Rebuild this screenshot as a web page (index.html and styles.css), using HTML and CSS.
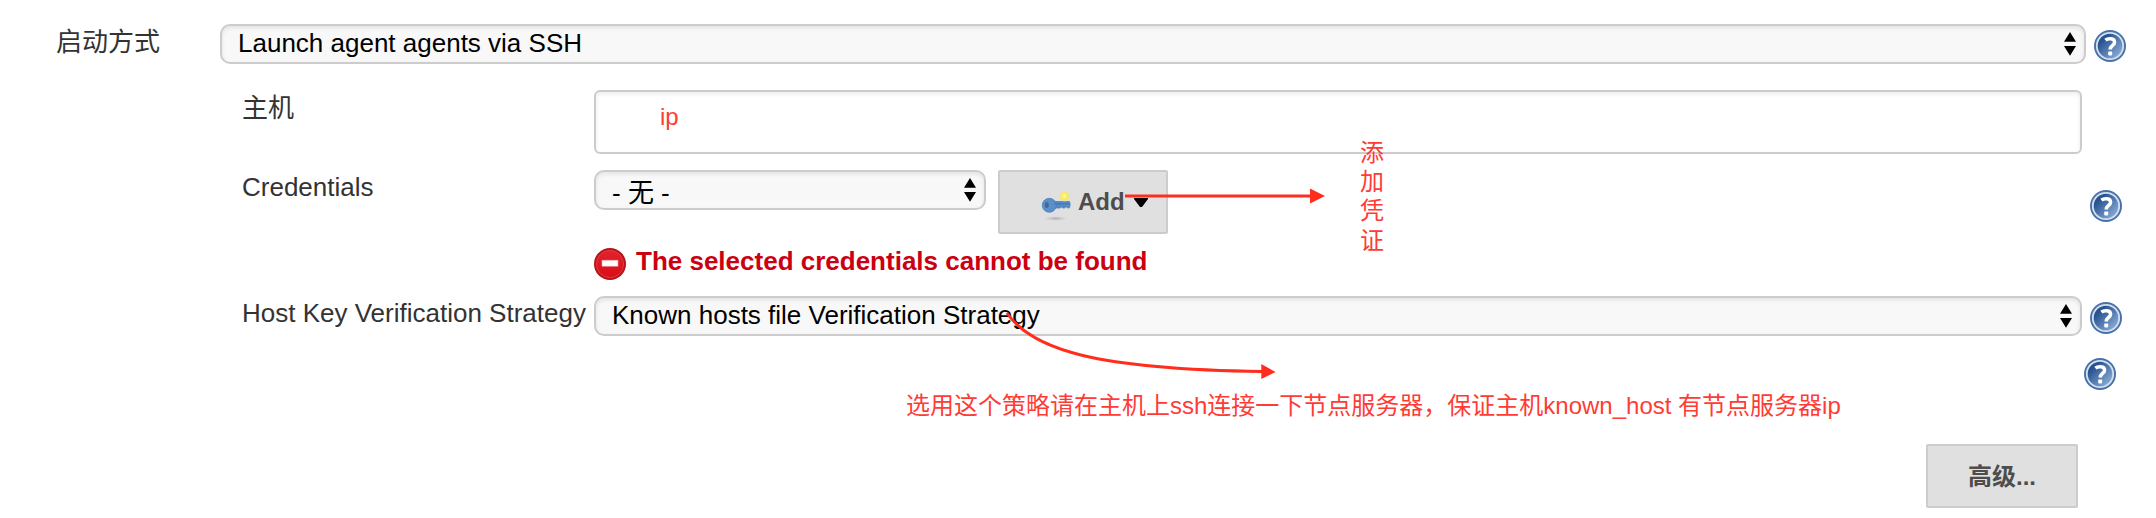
FILE: index.html
```html
<!DOCTYPE html>
<html lang="zh-CN">
<head>
<meta charset="utf-8">
<title>启动方式</title>
<link rel="stylesheet" href="styles.css">
</head>
<body>
<svg class="defs" width="0" height="0">
  <defs>
    <linearGradient id="blue" x1="0" y1="0" x2="1" y2="1"><stop offset=".25" stop-color="#285391"/><stop offset=".85" stop-color="#86aad3"/></linearGradient>
    <linearGradient id="red" x1="0" y1="0" x2="0" y2="1"><stop offset="0" stop-color="#e3222b"/><stop offset="1" stop-color="#d90d18"/></linearGradient>
    <radialGradient id="glow"><stop offset="0" stop-color="#fffbb0"/><stop offset=".5" stop-color="#f8ec57"/><stop offset="1" stop-color="#f3e760" stop-opacity=".35"/></radialGradient>
    <radialGradient id="shade"><stop offset="0" stop-color="#999" stop-opacity=".75"/><stop offset="1" stop-color="#bbb" stop-opacity="0"/></radialGradient>
  </defs>
  <symbol id="help" viewBox="0 0 32 32">
    <circle cx="16" cy="16" r="16" fill="#4872aa"/>
    <circle cx="16" cy="16" r="13.2" fill="url(#blue)" stroke="#d5e0ee" stroke-width="1.8"/>
    <path d="M11.4 10.2C14 8 20.6 7.8 20.6 12.2C20.6 15.5 16.2 15.4 16.2 19.6" fill="none" stroke="#fff" stroke-width="3.5"/>
    <rect x="14.2" y="21.6" width="4" height="3.8" rx=".8" fill="#fff"/>
  </symbol>
  <symbol id="updown" viewBox="0 0 12 24"><path d="M0 9.7L6 0L12 9.7ZM0 14L6 23.7L12 14Z"/></symbol>
</svg>
<main class="form">
  <div class="row row-launch">
    <label class="label">启动方式</label>
    <div class="select"><span>Launch agent agents via SSH</span><svg class="arrows"><use href="#updown"/></svg></div>
    <svg class="help"><use href="#help"/></svg>
  </div>
  <div class="row row-host">
    <label class="label">主机</label>
    <div class="input"><span class="note">ip</span></div>
  </div>
  <div class="row row-cred">
    <label class="label">Credentials</label>
    <div class="select select-short"><span>- 无 -</span><svg class="arrows"><use href="#updown"/></svg></div>
    <div class="button add">
      <svg class="key" viewBox="0 0 32 32">
        <ellipse cx="14.5" cy="28.5" rx="12" ry="2.4" fill="url(#shade)"/>
        <path d="M13 11.5L28.5 11.5Q30 14 28.5 17.8H26.5L25 16.7L23.5 18H22L20.5 17L19 18H13Z" fill="#558ac5" stroke="#4c80bb" stroke-width=".8"/>
        <circle cx="8.3" cy="15.3" r="7" fill="#5b8fc9" stroke="#4b80bc" stroke-width=".8"/>
        <ellipse cx="5.8" cy="15" rx="2" ry="3" fill="#47698c"/>
        <path d="M13 13.8H28.5" stroke="#4374ad"/>
        <circle cx="23.5" cy="6.2" r="5.5" fill="url(#glow)"/>
      </svg>
      <span>Add</span>
      <svg class="caret" viewBox="0 0 14 9"><path d="M0 0H14V1L8 9H6L0 1Z"/></svg>
    </div>
    <svg class="help"><use href="#help"/></svg>
  </div>
  <div class="row row-error">
    <svg class="error-icon" viewBox="0 0 32 32">
      <circle cx="16" cy="16" r="16" fill="#b9121b"/>
      <circle cx="16" cy="16" r="13.6" fill="url(#red)" stroke="#df3c43" stroke-width="1"/>
      <rect x="8" y="12.2" width="16" height="6" fill="#fff" stroke="#f3a6aa" stroke-width=".6"/>
    </svg>
    <span>The selected credentials cannot be found</span>
  </div>
  <div class="row row-strategy">
    <label class="label">Host Key Verification Strategy</label>
    <div class="select"><span>Known hosts file Verification Strategy</span><svg class="arrows"><use href="#updown"/></svg></div>
    <svg class="help"><use href="#help"/></svg>
  </div>
  <div class="row row-extra"><svg class="help"><use href="#help"/></svg></div>
  <div class="row row-actions"><div class="button advanced">高级...</div></div>
</main>
<svg class="marks" viewBox="0 0 2156 518">
  <path d="M1125 196H1312M1007 313C1032 350 1096 369 1263 371.5" fill="none" stroke="#ff2d1c" stroke-width="3"/>
  <path d="M1310 188.5L1325 196L1310 203.5ZM1261.3 364L1275.5 372L1261.3 379Z" fill="#ff2d1c"/>
</svg>
<div class="note note-credential">添加凭证</div>
<div class="note note-strategy">选用这个策略请在主机上ssh连接一下节点服务器，保证主机known_host 有节点服务器ip</div>
</body>
</html>
```
FILE: styles.css
```css
* { box-sizing: border-box; }
body {
  margin: 0;
  width: 2156px;
  height: 518px;
  position: relative;
  overflow: hidden;
  background: #fff;
  color: #333;
  font: 26px/30px "Liberation Sans", "Noto Sans CJK SC", sans-serif;
}
svg { display: block; flex: none; }
.defs { position: absolute; }
.form { padding-top: 24px; }
.row { display: flex; align-items: flex-start; padding-left: 242px; }
.label { width: 352px; flex: none; white-space: nowrap; }
.row-launch { height: 66px; padding-left: 56px; }
.row-launch .label { width: 164px; padding-top: 3px; }
.row-launch .select { width: 1866px; }
.row-host { height: 80px; }
.row-host .label { padding-top: 3px; }
.row-cred { height: 78px; }
.row-cred .label { padding-top: 2px; }
.row-error { height: 48px; padding-left: 594px; gap: 10px; color: #cc0010; font-weight: bold; }
.row-error span { line-height: 27px; }
.row-strategy { height: 62px; }
.row-strategy .label { padding-top: 2px; }
.row-extra { height: 86px; padding-left: 2084px; }
.row-actions { padding-left: 1926px; }

.select {
  width: 1488px;
  height: 40px;
  flex: none;
  display: flex;
  justify-content: space-between;
  padding: 2px 8px 0 16px;
  border: 2px solid #ccc;
  border-radius: 10px;
  background: #f8f8f8;
  box-shadow: inset 0 2px 4px rgba(0, 0, 0, .09);
  color: #000;
}
.arrows { width: 12px; height: 24px; margin-top: 4px; }
.select-short { width: 392px; padding-top: 6px; }
.select-short .arrows { margin-top: 0; }
.input {
  width: 1488px;
  height: 64px;
  padding: 9px 64px;
  border: 2px solid #ccc;
  border-radius: 6px;
  box-shadow: inset 0 2px 4px rgba(0, 0, 0, .08);
}
.help { width: 32px; height: 32px; margin: 6px 0 0 8px; }
.row-cred .help { margin: 20px 0 0 922px; }
.row-extra .help { margin: 0; }
.error-icon { width: 32px; height: 32px; }
.button {
  height: 64px;
  border: 2px solid #ccc;
  border-radius: 2px;
  background: #e0e0e0;
  color: #4d4d4d;
  font-size: 24px;
  font-weight: bold;
  display: flex;
  flex: none;
}
.add { width: 170px; margin-left: 12px; padding: 14px 0 0 40px; }
.key { width: 32px; height: 32px; margin: 4px 5px 0 1px; }
.add span { line-height: 31px; }
.caret { width: 14px; height: 9px; margin: 12px 0 0 9px; }
.advanced { width: 152px; justify-content: center; line-height: 61px; }

.marks { position: absolute; left: 0; top: 0; width: 2156px; height: 518px; }
.note { color: #ff3b36; font-size: 24px; }
.note-credential { position: absolute; left: 1360px; top: 138px; width: 24px; line-height: 29.2px; }
.note-strategy { position: absolute; left: 906px; top: 391px; white-space: nowrap; }
```
